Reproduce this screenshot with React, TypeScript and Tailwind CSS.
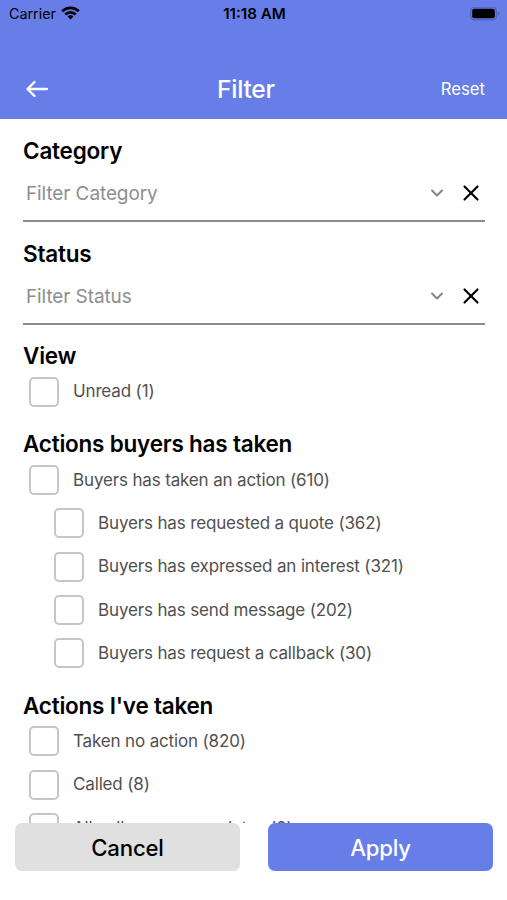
import { ChevronDown, X } from "lucide-react";
import { clsx } from "clsx";

type Option = {
  label: string;
  nested?: boolean;
};

const buyerActions: Option[] = [
  { label: "Buyers has taken an action (610)" },
  { label: "Buyers has requested a quote (362)", nested: true },
  { label: "Buyers has expressed an interest (321)", nested: true },
  { label: "Buyers has send message (202)", nested: true },
  { label: "Buyers has request a callback (30)", nested: true },
];

const myActions: Option[] = [
  { label: "Taken no action (820)" },
  { label: "Called (8)" },
  { label: "All callers some updates (0)" },
];

const StatusBar = () => (
  <div className="flex h-7 items-center pl-[9px] pr-[7px] text-black">
    <div className="flex flex-1 items-center gap-[6px] text-[14.3px]">
      Carrier
      <svg width="19" height="14" viewBox="0 0 19 14" fill="none" stroke="currentColor" strokeWidth="2.7" className="relative -top-px -left-px">
        <path d="M1.2 5.2a11.8 11.8 0 0 1 16.6 0" />
        <path d="M4.3 8.5a7.4 7.4 0 0 1 10.4 0" />
        <path d="M9.5 13.4 6.6 10.5a4.1 4.1 0 0 1 5.8 0z" fill="currentColor" stroke="none" />
      </svg>
    </div>
    <div className="text-center text-[15.2px] font-semibold">11:18 AM</div>
    <div className="flex flex-1 justify-end">
      <svg width="30" height="14" viewBox="0 0 30 14">
        <rect x="0.7" y="0.2" width="25.6" height="12.6" rx="3.6" fill="none" stroke="#4f62b8" strokeWidth="1.2" />
        <rect x="2.2" y="1.7" width="22.6" height="9.6" rx="2" fill="#000" />
        <path d="M27.6 4.5v4c1-.4 1.5-1.1 1.5-2s-.5-1.6-1.5-2z" fill="#4f62b8" />
      </svg>
    </div>
  </div>
);

const SelectField = ({ title, placeholder }: { title: string; placeholder: string }) => (
  <section className="h-[103px] pt-[17px]">
    <h2 className="text-[22.5px] font-semibold leading-[30px] tracking-[-0.2px]">{title}</h2>
    <div className="flex h-[56px] items-center border-b-2 border-[#8c8c8c] pl-[3px]">
      <span className="flex-1 pt-[2px] text-[19px] tracking-[-0.1px] text-[#8e8e8e]">{placeholder}</span>
      <ChevronDown className="mr-[11px] text-[#858585]" size={20} strokeWidth={2.5} />
      <X size={26} strokeWidth={2} className="mr-px" />
    </div>
  </section>
);

const CheckOption = ({ label, nested }: Option) => (
  <label className={clsx("flex h-[43.3px] items-center", nested ? "pl-[31px]" : "pl-[6px]")}>
    <span className="size-[30px] shrink-0 rounded-[5px] border-2 border-[#c6c6c6] bg-white" />
    <span className="ml-[14px] whitespace-nowrap pt-px text-[17px] tracking-[-0.15px] text-[#505050]">{label}</span>
  </label>
);

const CheckGroup = ({ title, options }: { title: string; options: Option[] }) => (
  <section className="pb-4">
    <h2 className="-mb-px text-[22.5px] font-semibold leading-[30px] tracking-[-0.22px]">{title}</h2>
    {options.map((option) => (
      <CheckOption key={option.label} {...option} />
    ))}
  </section>
);

export default function App() {
  return (
    <div className="flex h-[900px] w-full flex-col overflow-hidden bg-white font-['Inter',sans-serif] text-black">
      <header className="h-[119px] shrink-0 bg-[#677ee8]">
        <StatusBar />
        <div className="mt-[31px] flex h-[60px] items-center pl-[25px] pr-[22px] text-white">
          <svg width="24" height="20" viewBox="0 0 24 20" fill="none" stroke="currentColor" strokeWidth="2.3" strokeLinecap="round" strokeLinejoin="round">
            <path d="M22 10H2.5M9.5 3l-7 7 7 7" />
          </svg>
          <h1 className="flex-1 pl-[2px] text-center text-[24.5px] font-medium tracking-[-0.2px]">Filter</h1>
          <button className="pt-px text-right text-[16.7px]">Reset</button>
        </div>
      </header>

      <main className="min-h-0 flex-1 overflow-hidden pl-[23px] pr-[22px]">
        <SelectField title="Category" placeholder="Filter Category" />
        <SelectField title="Status" placeholder="Filter Status" />
        <div className="pt-4">
          <CheckGroup title="View" options={[{ label: "Unread (1)" }]} />
          <CheckGroup title="Actions buyers has taken" options={buyerActions} />
          <CheckGroup title="Actions I've taken" options={myActions} />
        </div>
      </main>

      <footer className="grid h-[77px] shrink-0 grid-cols-2 items-start gap-7 bg-white pl-[15px] pr-[14px]">
        <button className="h-12 rounded-[7px] bg-[#e0e0e0] pt-px text-[22.2px] font-medium tracking-[-0.2px]">Cancel</button>
        <button className="h-12 rounded-[7px] bg-[#677ee8] pt-px text-[22.2px] font-medium tracking-[-0.2px] text-white">Apply</button>
      </footer>
    </div>
  );
}
